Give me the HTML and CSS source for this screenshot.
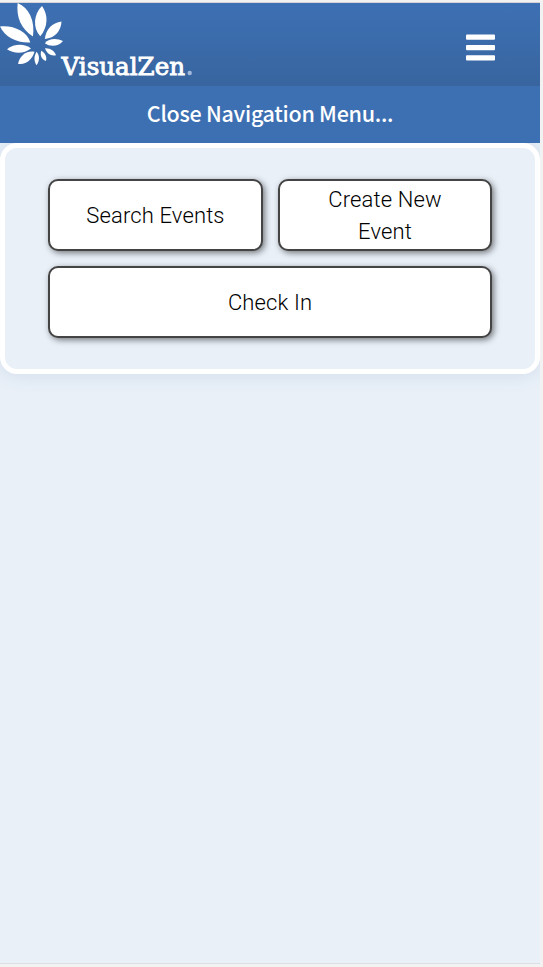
FILE: index.html
```
<!DOCTYPE html>
<html lang="en">
<head>
<meta charset="utf-8">
<title>VisualZen</title>
<link rel="stylesheet" href="styles.css">
</head>
<body>
<div class="app">
  <header class="header">
    <svg class="logo" width="200" height="83" viewBox="0 3 200 83" role="img" aria-label="VisualZen">
      <g fill="#fff">
        <path d="M17.700 3C29 8 35 20 33 36.500C21 29 16 17 17.700 3Z"/>
        <path d="M42 6C48.500 15 48 27 40.300 36.200C32.500 28 33.500 14 42 6Z"/>
        <path d="M61.500 21.500C61 31 55 38 44.800 39C46 29 52 23 61.500 21.500Z"/>
        <path d="M0 26.500C13 25 27 31 30.300 42.500C16 43 5 37 0 26.500Z"/>
        <path d="M63 41C58 47 50 47 44.800 43.300C49 38 57 38 63 41Z"/>
        <path d="M7 49.300C14 43.500 25 43.500 31 48.500C24 54 14 54 7 49.300Z"/>
        <path d="M56 55.300C50.500 56.500 46.500 53 45 48.300C50.500 48 54.500 51 56 55.300Z"/>
        <path d="M18 63.700C20 55 27 50.500 34.500 51.800C32 60 26 65 18 63.700Z"/>
        <path d="M36.500 65.300C33.500 60 34 56 36.700 51.700C40 56 39.500 61 36.500 65.300Z"/>
        <path d="M46 61C41 59 40 55 41.200 50.700C45.500 53 47 57 46 61Z"/>
      </g>
      <text class="wordmark" x="61.500" y="74.500" textLength="123.500" lengthAdjust="spacingAndGlyphs">VisualZen</text>
      <circle cx="189.700" cy="73" r="2.200" fill="#a3b9dc"/>
    </svg>
    <svg class="menu" width="29" height="27" viewBox="0 0 29 27" aria-label="Menu">
      <g fill="#fff"><rect y=".5" width="29" height="5.200" rx="1"/><rect y="11" width="29" height="5.200" rx="1"/><rect y="21.300" width="29" height="5.200" rx="1"/></g>
    </svg>
  </header>
  <nav class="close"><span>Close Navigation Menu...</span></nav>
  <main class="panel">
    <button class="tile">Search Events</button>
    <button class="tile">Create New Event</button>
    <button class="tile wide">Check In</button>
  </main>
</div>
</body>
</html>
```
FILE: styles.css
```
* { box-sizing: border-box; }
body { margin: 0; background: #f2f2f2; }
.app {
  width: 540px;
  height: 962px;
  margin-top: 2px;
  padding-top: 1px;
  background: #e9f0f8;
  border-bottom: 1px solid #dcdfe3;
  box-shadow: inset 0 1px #d6d4d2;
  overflow: hidden;
}
.header {
  height: 83px;
  display: flex;
  justify-content: space-between;
  align-items: flex-start;
  padding-right: 45px;
  background: linear-gradient(#3d70b4, #38659f);
}
.logo { display: block; }
.menu { margin-top: 31px; }
.wordmark {
  font: 24px "DejaVu Serif", serif;
  fill: #fff;
  stroke: #fff;
  stroke-width: .9px;
}
.close {
  position: relative;
  z-index: 1;
  height: 57px;
  display: flex;
  align-items: center;
  justify-content: center;
  padding-bottom: 4px;
  background: #3d70b3;
  color: #fff;
  font: 500 21.5px/53px "Noto Sans CJK JP", sans-serif;
  letter-spacing: -.28px;
  white-space: nowrap;
}
.panel {
  height: 231px;
  padding: 31px 43px 0;
  display: grid;
  grid-template-columns: 215px 214px;
  grid-template-rows: 72px 72px;
  gap: 15px;
  align-content: start;
  border: 5px solid #fff;
  border-radius: 17px;
  background: #e9f0f8;
  box-shadow: 0 0 20px rgba(60, 90, 150, .14);
}
.tile {
  padding: 2px 32px 0;
  border: 2px solid #444;
  border-radius: 10px;
  background: #fff;
  box-shadow: 2px 2px 6px rgba(0, 0, 0, .5);
  color: #000;
  font: 300 22px/32px Roboto, sans-serif;
  letter-spacing: .13px;
}
.wide { grid-column: 1 / -1; }
```
